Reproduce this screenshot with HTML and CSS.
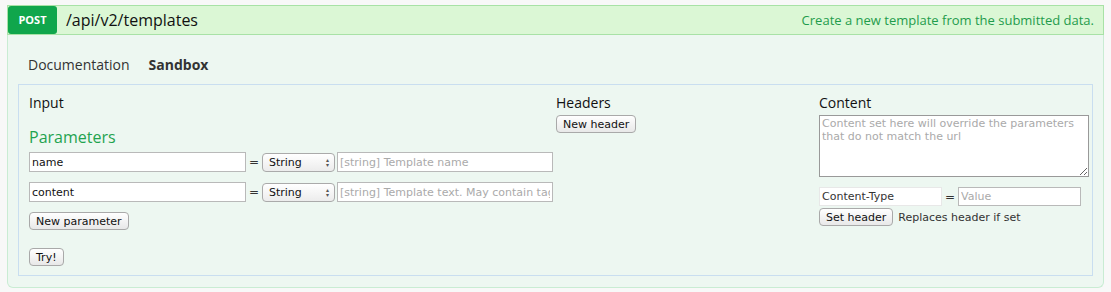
FILE: index.html
```html
<!DOCTYPE html>
<html lang="en">
<head>
    <meta charset="UTF-8">
    <title>POST /api/v2/templates</title>
    <link rel="stylesheet" href="styles.css">
</head>
<body>
    <div class="endpoint">
        <div class="heading">
            <span class="method">POST</span>
            <span class="path">/api/v2/templates</span>
            <span class="desc">Create a new template from the submitted data.</span>
        </div>
        <div class="content">
            <ul class="tabs">
                <li>Documentation</li>
                <li class="selected">Sandbox</li>
            </ul>
            <form class="sandbox">
                <div class="col">
                    <h4>Input</h4>
                    <h5>Parameters</h5>
                    <div class="param">
                        <input type="text" class="key" value="name">
                        <span class="eq">=</span>
                        <span class="select"><select><option>String</option></select></span>
                        <input type="text" class="val" placeholder="[string] Template name">
                    </div>
                    <div class="param">
                        <input type="text" class="key" value="content">
                        <span class="eq">=</span>
                        <span class="select"><select><option>String</option></select></span>
                        <input type="text" class="val" placeholder="[string] Template text. May contain tags">
                    </div>
                    <button type="button" class="btn">New parameter</button>
                    <div class="try"><button type="button" class="btn">Try!</button></div>
                </div>
                <div class="col">
                    <h4>Headers</h4>
                    <button type="button" class="btn newheader">New header</button>
                </div>
                <div class="col">
                    <h4>Content</h4>
                    <textarea placeholder="Content set here will override the parameters that do not match the url"></textarea>
                    <div class="ctype">
                        <input type="text" class="hkey" value="Content-Type">
                        <span class="eq">=</span>
                        <input type="text" class="hval" placeholder="Value">
                    </div>
                    <div class="sethead">
                        <button type="button" class="btn">Set header</button>
                        <span>Replaces header if set</span>
                    </div>
                </div>
            </form>
        </div>
    </div>
</body>
</html>
```

FILE: styles.css
```css
body {
    margin: 0;
    padding: 5px 8px 4px 7px;
    background-color: #f8f8f8;
    font-family: "Open Sans", sans-serif;
    color: #222;
}

.endpoint {
    width: 1097px;
}

.heading {
    display: flex;
    align-items: center;
    height: 28px;
    background-color: #dbf7d5;
    border: 1px solid #a8e2a6;
}

.method {
    width: 49px;
    height: 28px;
    line-height: 28px;
    text-align: center;
    background-color: #10a64c;
    color: white;
    font-size: 11px;
    font-weight: bold;
    border-radius: 3px;
}

.path {
    margin-left: 9px;
    font-size: 16px;
    color: #111;
}

.desc {
    margin-left: auto;
    margin-right: 9px;
    font-size: 13px;
    color: #1f9c4c;
}

.content {
    background-color: #edf7f1;
    border: 1px solid #c9ecd3;
    border-top: none;
    border-radius: 0 0 6px 6px;
    padding: 20px 10px 11px 10px;
}

.tabs {
    list-style: none;
    margin: 0 0 9px 0;
    padding: 0 0 0 10px;
    display: flex;
    gap: 19px;
    font-size: 14px;
    line-height: 20px;
    color: #333;
}

.tabs .selected {
    font-weight: bold;
}

.sandbox {
    display: grid;
    grid-template-columns: 527px 263px minmax(0, 1fr);
    border: 1px solid #c9def0;
    padding: 8px 10px 9px 10px;
    font-family: "DejaVu Sans", sans-serif;
    font-size: 11px;
}

h4 {
    margin: 0;
    font-family: "Open Sans", sans-serif;
    font-size: 14px;
    font-weight: normal;
    line-height: 20px;
    color: #111;
}

h5 {
    margin: 13px 0 4px 0;
    font-family: "Open Sans", sans-serif;
    font-size: 16px;
    font-weight: normal;
    line-height: 22px;
    color: #1fa34f;
}

input[type="text"], textarea {
    box-sizing: border-box;
    font-family: "DejaVu Sans", sans-serif;
    font-size: 11px;
    border: 1px solid #b9b9b9;
    background: white;
    padding: 1px 2px;
    color: #111;
}

input::placeholder, textarea::placeholder {
    color: #aaa;
}

.param {
    display: flex;
    align-items: center;
    height: 20px;
    margin-bottom: 10px;
}

.key {
    width: 217px;
    height: 20px;
}

.eq {
    width: 16px;
    text-align: center;
    font-size: 12px;
    color: #333;
}

.select {
    position: relative;
    margin-right: 2px;
}

.select::after {
    content: "\25B4\A\25BE";
    white-space: pre;
    position: absolute;
    right: 6px;
    top: 4px;
    font-size: 6px;
    line-height: 5px;
    color: #555;
    pointer-events: none;
}

select {
    appearance: none;
    display: block;
    width: 73px;
    height: 19px;
    font-family: "DejaVu Sans", sans-serif;
    font-size: 11px;
    color: #111;
    border: 1px solid #aaa;
    border-radius: 4px;
    background: linear-gradient(#fff, #ececec);
    padding: 0 6px;
}

.val {
    width: 216px;
    height: 20px;
}

.btn {
    font-family: "DejaVu Sans", sans-serif;
    font-size: 11px;
    height: 18px;
    padding: 0 6px;
    border: 1px solid #a9a9a9;
    border-radius: 4px;
    background: linear-gradient(#fff, #e8e8e8);
    color: #111;
}

.try {
    margin-top: 18px;
}

.newheader {
    margin-top: 2px;
}

textarea {
    display: block;
    width: 270px;
    height: 62px;
    margin-top: 2px;
    resize: vertical;
    border-color: #999;
}

.ctype {
    display: flex;
    align-items: center;
    margin-top: 10px;
    height: 19px;
}

.hkey {
    width: 123px;
    height: 19px;
    border-color: #e8e8e8 !important;
    color: #333 !important;
}

.hval {
    width: 123px;
    height: 19px;
}

.sethead {
    display: flex;
    align-items: center;
    gap: 5px;
    margin-top: 2px;
    color: #333;
    font-size: 11px;
}
```
